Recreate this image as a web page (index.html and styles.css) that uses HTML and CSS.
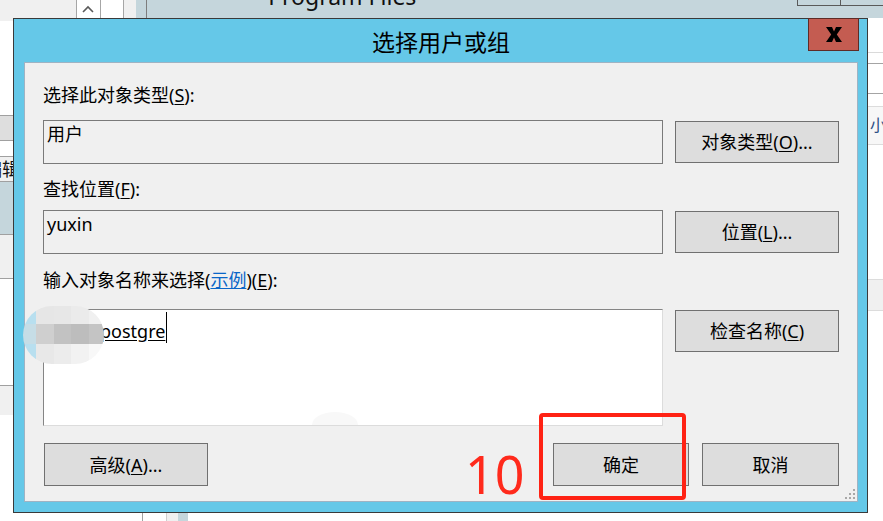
FILE: index.html
```html
<!DOCTYPE html>
<html lang="zh-CN">

<head>
   <meta charset="UTF-8">
   <meta name="viewport" content="width=device-width, initial-scale=1.0">
   <title>选择用户或组</title>
   <link rel="stylesheet" href="styles.css">
</head>

<body>
   <!-- windows behind the dialog -->
   <div class="desktop">
      <div class="top-strip">
         <div class="ts-gray"></div>
         <div class="ts-scroll">
            <svg width="12" height="8" viewBox="0 0 12 8">
               <path d="M1 7 L6 2 L11 7" fill="none" stroke="#5a5a5a" stroke-width="1.6" />
            </svg>
         </div>
         <div class="ts-box"></div>
         <div class="ts-gap"></div>
         <div class="ts-edge"></div>
         <div class="ts-folder"><span>Program Files</span></div>
         <div class="ts-cells">
            <div class="ts-cell"></div>
            <div class="ts-cell"></div>
         </div>
      </div>

      <div class="middle">
         <div class="left-strip">
            <div class="band b-f0 h3"></div>
            <div class="band b-white h94"></div>
            <div class="band b-gray h26"></div>
            <div class="band b-white h15"></div>
            <div class="band b-f0 h25 lined-top"><span class="clip-text">编辑</span></div>
            <div class="band b-blue h53 lined-top"></div>
            <div class="band b-f0 h44 lined-top"></div>
            <div class="band b-white h107 lined-top"></div>
            <div class="band b-f0 h30 lined-top"></div>
            <div class="band b-white fill"></div>
         </div>
         <div class="spacer"></div>
         <div class="right-strip">
            <div class="band b-white h35 soft-bottom"></div>
            <div class="band b-white h11 soft-bottom dark"></div>
            <div class="band b-white h30 soft-bottom dark"></div>
            <div class="band b-white h12"></div>
            <div class="band b-f7 h39 soft-both"><span class="side-text">小</span></div>
            <div class="band b-white h134"></div>
            <div class="band b-f0 h32 soft-both"></div>
            <div class="band b-white fill"></div>
         </div>
      </div>

      <div class="bottom-strip">
         <div class="bs-line"></div>
         <div class="bs-box"></div>
      </div>
   </div>

   <!-- the dialog window -->
   <div class="dialog">
      <div class="titlebar">选择用户或组</div>
      <div class="close-btn">
         <svg width="16" height="15" viewBox="0 0 16 15">
            <polygon points="0,0 6,0 8,4.6 10,0 16,0 10.8,7.5 16,15 10,15 8,10.4 6,15 0,15 5.2,7.5" fill="#000" />
         </svg>
      </div>

      <div class="panel">
         <div class="label first">选择此对象类型(<u>S</u>):</div>
         <div class="row r1">
            <div class="field">用户</div>
            <div class="btn">对象类型(<u>O</u>)...</div>
         </div>

         <div class="label l2">查找位置(<u>F</u>):</div>
         <div class="row r2">
            <div class="field">yuxin</div>
            <div class="btn">位置(<u>L</u>)...</div>
         </div>

         <div class="label l3">输入对象名称来选择(<a class="link" href="#">示例</a>)(<u>E</u>):</div>
         <div class="row r3">
            <div class="entry">
               <div class="entry-line">
                  <span class="typed">postgre</span><span class="caret"></span>
               </div>
               <div class="blur">
                  <div class="c c1"></div><div class="c c2"></div><div class="c c3"></div><div class="c c4"></div><div class="c c5"></div>
                  <div class="c c6"></div><div class="c c7"></div><div class="c c8"></div><div class="c c9"></div><div class="c c10"></div>
                  <div class="c c11"></div><div class="c c12"></div><div class="c c13"></div><div class="c c14"></div><div class="c c15"></div>
               </div>
               <div class="ghost"></div>
            </div>
            <div class="btn check">检查名称(<u>C</u>)</div>
         </div>

         <div class="row actions">
            <div class="btn advanced">高级(<u>A</u>)...</div>
            <div class="grow"></div>
            <div class="btn ok">确定</div>
            <div class="btn cancel">取消</div>
         </div>

         <svg class="grip" width="12" height="12" viewBox="0 0 12 12">
            <rect x="9" y="1" width="2" height="2" fill="#a8a8a8" />
            <rect x="5" y="5" width="2" height="2" fill="#a8a8a8" />
            <rect x="9" y="5" width="2" height="2" fill="#a8a8a8" />
            <rect x="1" y="9" width="2" height="2" fill="#a8a8a8" />
            <rect x="5" y="9" width="2" height="2" fill="#a8a8a8" />
            <rect x="9" y="9" width="2" height="2" fill="#a8a8a8" />
         </svg>
      </div>
   </div>

   <!-- red annotation -->
   <div class="mark-box"></div>
   <div class="mark-num">10</div>
</body>

</html>
```

FILE: styles.css
```css
* {
   box-sizing: border-box;
}

body {
   margin: 0;
   width: 883px;
   height: 521px;
   overflow: hidden;
   position: relative;
   font-family: "Noto Sans", "Noto Sans CJK SC", sans-serif;
   font-size: 18px;
   color: #000;
   background-color: #fff;
}

/* ---------- background windows ---------- */

.desktop {
   display: flex;
   flex-direction: column;
   height: 521px;
}

.top-strip {
   display: flex;
   height: 18px;
   flex-shrink: 0;
}

.ts-gray {
   width: 76px;
   background-color: #f0f0f0;
}

.ts-scroll {
   width: 25px;
   background-color: #fff;
   border-left: 1px solid #a6a6a6;
   display: flex;
   justify-content: center;
   padding-top: 5px;
}

.ts-box {
   width: 24px;
   background-color: #fff;
   border-left: 1px solid #a6a6a6;
   border-right: 1px solid #a6a6a6;
}

.ts-gap {
   width: 12px;
   background-color: #f0f0f0;
}

.ts-edge {
   width: 11px;
   background-color: #c5d6dc;
   border-right: 1px solid #7d7d7d;
}

.ts-folder {
   width: 653px;
   background-color: #c5d6dc;
   padding-left: 121px;
   overflow: hidden;
}

.ts-folder span {
   display: block;
   font-size: 23px;
   line-height: 23px;
   margin-top: -15px;
   color: #111;
}

.ts-cells {
   flex: 1;
   display: flex;
   background-color: #c5d6dc;
}

.ts-cell {
   height: 6px;
   width: 43px;
   border-left: 1px solid #5a5a5a;
   border-bottom: 1px solid #5a5a5a;
}

.ts-cell + .ts-cell {
   flex: 1;
}

.middle {
   display: flex;
   height: 495px;
}

.left-strip {
   width: 13px;
   display: flex;
   flex-direction: column;
   overflow: hidden;
}

.spacer {
   flex: 1;
}

.right-strip {
   width: 15px;
   display: flex;
   flex-direction: column;
   overflow: hidden;
}

.band {
   flex-shrink: 0;
}

.fill {
   flex: 1;
}

.b-white { background-color: #fff; }
.b-f0 { background-color: #f0f0f0; }
.b-f7 { background-color: #f7f7f7; }
.b-gray { background-color: #dedede; border-top: 1px solid #a0a0a0; border-bottom: 1px solid #a0a0a0; }
.b-blue { background-color: #c5d6dc; }

.lined-top { border-top: 1px solid #a0a0a0; }
.soft-bottom { border-bottom: 1px solid #dadada; }
.soft-bottom.dark { border-bottom-color: #a4a4a4; }
.soft-both { border-top: 1px solid #dcdcdc; border-bottom: 1px solid #dcdcdc; }

.h3 { height: 3px; }
.h11 { height: 11px; }
.h12 { height: 12px; }
.h15 { height: 15px; }
.h25 { height: 25px; }
.h26 { height: 26px; }
.h30 { height: 30px; }
.h32 { height: 32px; }
.h35 { height: 35px; }
.h39 { height: 39px; }
.h44 { height: 44px; }
.h53 { height: 53px; }
.h94 { height: 94px; }
.h107 { height: 107px; }
.h134 { height: 134px; }

.clip-text {
   display: block;
   white-space: nowrap;
   margin-left: -16px;
   line-height: 24px;
   color: #111;
}

.side-text {
   display: block;
   white-space: nowrap;
   margin-left: 2px;
   font-size: 16px;
   line-height: 37px;
   color: #2f4f86;
}

.bottom-strip {
   flex: 1;
   position: relative;
   display: flex;
   padding-left: 142px;
}

.bs-line {
   width: 1px;
   background-color: #a0a0a0;
}

.bs-box {
   margin-left: 23px;
   width: 22px;
   background: linear-gradient(to right, #f0f0f0 50%, #c5d6dc 50%);
   border-left: 1px solid #cfcfcf;
}

/* ---------- dialog ---------- */

.dialog {
   position: absolute;
   left: 13px;
   top: 18px;
   width: 855px;
   height: 495px;
   background-color: #65c8e8;
   border: 1px solid #3a3a3a;
   padding: 0 9px 10px 10px;
   display: flex;
   flex-direction: column;
}

.titlebar {
   height: 43px;
   flex-shrink: 0;
   display: flex;
   justify-content: center;
   align-items: center;
   font-size: 23px;
   padding-top: 1px;
}

.close-btn {
   position: absolute;
   top: -1px;
   right: 8px;
   width: 51px;
   height: 33px;
   background-color: #c45c51;
   border: 1px solid #5e2b26;
   display: flex;
   justify-content: center;
   align-items: center;
}

.panel {
   flex: 1;
   position: relative;
   background-color: #f0f0f0;
   border: 1px solid #9fb3c3;
   padding: 20px 0 0 18px;
}

.label {
   height: 24px;
   line-height: 24px;
   white-space: nowrap;
}

.label.l2 {
   margin-top: 13px;
}

.label.l3 {
   margin-top: 14px;
}

.link {
   color: #0a66c8;
}

u {
   text-underline-offset: 2px;
}

.row {
   display: flex;
   align-items: center;
   gap: 12px;
   width: 796px;
}

.row.r1 {
   margin-top: 13px;
}

.row.r2 {
   margin-top: 9px;
}

.row.r3 {
   margin-top: 17px;
   align-items: flex-start;
}

.field {
   width: 620px;
   height: 44px;
   border: 1px solid #7a7a7a;
   padding: 1px 3px;
   line-height: 24px;
}

.btn {
   width: 164px;
   height: 42px;
   background-color: #dddddd;
   border: 1px solid #707070;
   display: flex;
   justify-content: center;
   align-items: center;
   white-space: nowrap;
   line-height: 24px;
}

.btn.check {
   margin-top: 1px;
}

.entry {
   width: 620px;
   height: 117px;
   position: relative;
   background-color: #fff;
   border-top: 1px solid #858585;
   border-left: 1px solid #858585;
   border-right: 1px solid #dcdcdc;
   border-bottom: 1px solid #dcdcdc;
}

.entry-line {
   display: flex;
   align-items: flex-end;
   height: 31px;
   margin-top: 2px;
   padding-left: 56px;
}

.typed {
   line-height: 24px;
   text-decoration: underline;
   text-underline-offset: 2px;
}

.caret {
   width: 1px;
   height: 31px;
   margin-left: 1px;
   background-color: #000;
}

/* mosaic over the masked part of the name */
.blur {
   position: absolute;
   left: -21px;
   top: -4px;
   width: 81px;
   height: 58px;
   border-radius: 29px;
   overflow: hidden;
   display: grid;
   grid-template-columns: 13px 18px 17px 18px 15px;
   grid-template-rows: 18px 20px 20px;
}

.c1 { background-color: #b8dfef; }
.c2 { background-color: #e6e6e6; }
.c3 { background-color: #e7e7e7; }
.c4 { background-color: #ebebeb; }
.c5 { background-color: #f0f0f0; }
.c6 { background-color: #c6dde6; }
.c7 { background-color: #cfcfcf; }
.c8 { background-color: #c2c2c2; }
.c9 { background-color: #bdbdbd; }
.c10 { background-color: #c4c4c4; }
.c11 { background-color: #b8dfef; }
.c12 { background-color: #e8e8e8; }
.c13 { background-color: #ececec; }
.c14 { background-color: #f2f2f2; }
.c15 { background-color: #f8f8f8; }

.ghost {
   position: absolute;
   left: 268px;
   bottom: 0;
   width: 46px;
   height: 13px;
   border-radius: 50% 50% 0 0 / 100% 100% 0 0;
   background-color: #f8f8f8;
}

.row.actions {
   margin-top: 17px;
   gap: 0;
}

.actions .btn {
   height: 43px;
}

.btn.advanced {
   margin-left: 1px;
   width: 164px;
}

.grow {
   flex: 1;
}

.btn.ok {
   width: 136px;
   margin-right: 13px;
}

.btn.cancel {
   width: 137px;
}

.grip {
   position: absolute;
   right: 1px;
   bottom: 1px;
}

/* ---------- red annotation ---------- */

.mark-box {
   position: absolute;
   left: 539px;
   top: 413px;
   width: 147px;
   height: 87px;
   border: 4px solid #ff2214;
   border-radius: 4px;
}

.mark-num {
   position: absolute;
   left: 465px;
   top: 448px;
   font-size: 52px;
   line-height: 52px;
   color: #ff2a1c;
}
```
